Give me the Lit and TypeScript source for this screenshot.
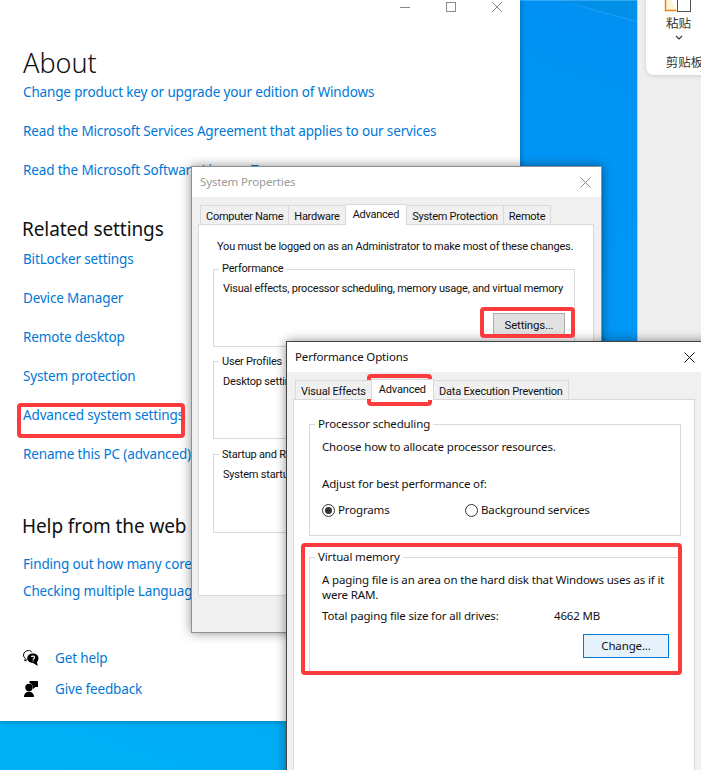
import { LitElement, html, css } from "lit";
import { customElement } from "lit/decorators.js";

@customElement("app-root")
export class AppRoot extends LitElement {
  static styles = css`
    :host { display: block; width: 701px; height: 770px; position: relative; overflow: hidden; background: #efefef; font-family: "Noto Sans", "Noto Sans CJK SC", sans-serif; color: #111; }
    * { box-sizing: border-box; }
    .desktop { position: absolute; left: 0; top: 0; width: 638px; height: 770px; background: linear-gradient(200deg, #0091f2 0%, #009bf6 50%, #00b2f5 100%); border-right: 1px solid #c9c9c9; overflow: hidden; }
    .streak { position: absolute; left: 0; top: 0; }
    .ribbon { position: absolute; left: 646px; top: -10px; width: 70px; height: 85px; background: #fff; border-radius: 8px; box-shadow: 0 1px 4px rgba(0,0,0,.15); display: flex; flex-direction: column; align-items: center; padding: 0 15px 0 0; font-size: 12.5px; color: #333; }
    .ribbon svg { display: block; margin-left: 10px; }
    .paste { margin-top: 3px; line-height: 18px; margin-left: 10px; }
    .chev { margin-top: 2px; }
    .clip { margin-top: 14px; line-height: 18px; margin-left: 22px; white-space: nowrap; }

    .settings { position: absolute; left: 0; top: 0; width: 520px; height: 721px; background: #fff; box-shadow: 0 0 6px rgba(0,0,0,.35); padding: 43px 0 0 23px; }
    .controls { position: absolute; left: 0; top: 0; }
    h1 { margin: 0 0 -1px; font-weight: 300; font-size: 27px; line-height: 40px; }
    h2 { margin: 0 0 0 -1px; font-weight: 400; font-size: 19px; line-height: 28px; letter-spacing: -.1px; }
    .link { display: block; color: #0078d7; font-size: 13.5px; letter-spacing: -.15px; line-height: 20px; white-space: nowrap; text-decoration: none; }
    .spaced { margin-top: 19px; }
    .near { margin-top: 7px; }
    .h-rel { margin-top: 35px; }
    .r2 { margin-top: 6px; }
    .h-web { margin-top: 48px; }
    .r3 { margin-top: 14px; }
    .support { display: flex; align-items: center; gap: 16px; }
    .s1 { margin-top: 47px; }
    .s2 { margin-top: 11px; }
    .support svg { flex: none; }

    .dlg { position: absolute; background: #f0f0f0; box-shadow: 0 0 10px rgba(0,0,0,.45); font-size: 11.5px; letter-spacing: -.15px; line-height: 16px; color: #111; border: 1px solid #8f8f8f; }
    .sys { left: 191px; top: 166px; width: 411px; height: 467px; font-family: Roboto, sans-serif; font-size: 11px; letter-spacing: -.2px; }
    .perf { left: 286px; top: 341px; width: 430px; height: 440px; border-color: #444; }
    .title { height: 30px; background: #fff; display: flex; align-items: center; justify-content: space-between; padding: 0 0 0 8px; font-family: "Noto Sans", sans-serif; font-size: 11.5px; letter-spacing: -.15px; }
    .sys .title { color: #9a9a9a; }
    .title svg { display: block; }
    .sys .title svg { margin-right: 10px; }
    .perf .title svg { margin-right: 20px; }
    .tabs { display: flex; align-items: flex-end; height: 27px; position: relative; z-index: 1; padding-left: 8px; font-family: Roboto, sans-serif; font-size: 11px; letter-spacing: -.25px; }
    .perf .tabs { letter-spacing: -.18px; }
    .tab { height: 19px; background: #f0f0f0; border: 1px solid #d9d9d9; border-bottom: none; border-left: none; padding: 3px 5px 0; line-height: 16px; white-space: nowrap; }
    .tab:first-child { border-left: 1px solid #d9d9d9; }
    .tab.on { height: 21px; background: #fff; border-left: 1px solid #d9d9d9; padding: 2px 7px 0; margin-left: -1px; margin-bottom: -1px; }
    .panel { background: #fff; border: 1px solid #d9d9d9; }
    .sys .panel { margin: 0 7px 0 6px; height: 372px; padding: 14px 18px 0 14px; }
    .perf .panel { margin: 0 20px 0 6px; height: 400px; padding: 24px 13px 0 15px; }
    .group { position: relative; border: 1px solid #d9d9d9; }
    .legend { position: absolute; left: 5px; top: -9px; background: #fff; padding: 0 3px; line-height: 16px; white-space: nowrap; }
    .sys .g2 .legend, .sys .g3 .legend { top: -8px; }
    .sys .g1 { margin-top: 14px; height: 78px; padding: 11px 8px 0 9px; }
    .sys .g2 { margin-top: 14px; height: 78px; padding: 12px 8px 0 9px; }
    .sys .g3 { margin-top: 15px; height: 79px; padding: 12px 8px 0 9px; }
    .sys .group p { margin: 0; white-space: nowrap; }
    .intro { margin: 0 0 0 4px; white-space: nowrap; }
    .btnrow { display: flex; justify-content: flex-end; }
    .btn { font: inherit; letter-spacing: inherit; color: #111; background: #e1e1e1; border: 1px solid #adadad; padding: 0; display: block; }
    .settingsbtn { width: 72px; height: 23px; margin: 16px 1px 0 0; font-size: 11.5px; }
    .perf .g4 { height: 112px; padding: 14px 12px 0 12px; }
    .perf .group p { margin: 0; }
    .perf .g4 .adjust { margin-top: 21px; }
    .radios { display: flex; margin-top: 10px; }
    .radio { display: flex; align-items: center; gap: 3px; }
    .radio.a { width: 143px; }
    .perf .g5 { margin-top: 21px; height: 117px; padding: 14px 6px 0 12px; }
    .perf .g5 p { line-height: 15px; }
    .size { display: flex; margin-top: 6px; }
    .size span:first-child { width: 232px; }
    .changerow { margin-top: 10px; padding-right: 6px; }
    .changebtn { width: 86px; height: 24px; background: #e5f1fb; border-color: #0078d7; margin-right: -1px; }

    .mark { position: absolute; border: 4px solid #fc3b3f; border-radius: 4px; pointer-events: none; }
    .m1 { left: 480px; top: 307px; width: 95px; height: 31px; }
    .m2 { left: 367px; top: 374px; width: 65px; height: 32px; }
    .m3 { left: 301px; top: 543px; width: 381px; height: 132px; }
    .m4 { left: 17px; top: 403px; width: 168px; height: 35px; }
  `;

  render() {
    return html`
      <div class="desktop">
        <svg class="streak" width="638" height="30" viewBox="0 0 638 30"><polygon points="520,0 638,0 638,1 520,1" fill="#fff" fill-opacity=".2"/><polygon points="563,1 638,1 638,21" fill="#0090e8"/><polygon points="563,1 638,21 638,22.500 590,9.500" fill="#fff" fill-opacity=".1"/></svg>
      </div>
      <div class="ribbon">
        <svg width="30" height="22" viewBox="0 0 30 22"><path d="M1.500 0v20.500h11" fill="#fff3d6" stroke="#e8871e" stroke-width="1.500"/><rect x="13.500" y="0" width="13" height="21.500" fill="#fff" stroke="#555"/></svg>
        <div class="paste">粘贴</div>
        <svg class="chev" width="8" height="5" viewBox="0 0 8 5"><path d="M1 1l3 3 3-3" fill="none" stroke="#333" stroke-width="1.100"/></svg>
        <div class="clip">剪贴板</div>
      </div>

      <section class="settings">
        <svg class="controls" width="520" height="14" viewBox="0 0 520 14" fill="none" stroke="#8a8a8a">
          <path d="M400 7.500h10"/><rect x="446.500" y="2.500" width="9" height="9"/><path d="M492 2l10 10M502 2l-10 10"/>
        </svg>
        <h1>About</h1>
        <a class="link">Change product key or upgrade your edition of Windows</a>
        <a class="link spaced">Read the Microsoft Services Agreement that applies to our services</a>
        <a class="link spaced">Read the Microsoft Software License Terms</a>
        <h2 class="h-rel">Related settings</h2>
        <a class="link r2">BitLocker settings</a>
        <a class="link spaced">Device Manager</a>
        <a class="link spaced">Remote desktop</a>
        <a class="link spaced">System protection</a>
        <a class="link spaced">Advanced system settings</a>
        <a class="link spaced">Rename this PC (advanced)</a>
        <h2 class="h-web">Help from the web</h2>
        <a class="link r3">Finding out how many cores my processor has</a>
        <a class="link near">Checking multiple Languages</a>
        <div class="support s1">
          <svg width="16" height="16" viewBox="0 0 16 16"><path d="M9 2.200C8.200 1.200 7 .5 5.700.5 3 .5.500 2.400.500 5c0 1.400.7 2.500 1.800 3.400L1.800 11l2.800-1.700" fill="none" stroke="#000" stroke-width="1"/><path d="M10 3.500c-3.200 0-5.700 2.100-5.700 4.700s2.500 4.700 5.700 4.700l4.800 3-1-3.800c1-.9 1.700-2.300 1.700-3.900 0-2.600-2.400-4.700-5.500-4.700z" fill="#000"/><path d="M8.400 7c.2-1.200 3.200-1.300 3.200.4 0 1.100-1.500 1.100-1.500 2.300M10.100 10.400v1.200" fill="none" stroke="#fff" stroke-width="1.100"/></svg>
          <a class="link">Get help</a>
        </div>
        <div class="support s2">
          <svg width="16" height="16" viewBox="0 0 16 16" fill="#000"><circle cx="6" cy="6.500" r="3.700"/><path d="M1 16c0-3.200 2-5.200 5-5.200s5 2 5 5.200z"/><path d="M6.500 0H15v6h-2.500L10 8V6H9.800C9.500 4 8.300 2.500 6.500 2z"/></svg>
          <a class="link">Give feedback</a>
        </div>
      </section>

      <section class="dlg sys">
        <div class="title"><span>System Properties</span><svg width="11" height="11" viewBox="0 0 11 11" fill="none" stroke="#8a8a8a"><path d="M.5.5l10 10M10.500.5l-10 10"/></svg></div>
        <div class="tabs">
          <div class="tab">Computer Name</div><div class="tab">Hardware</div><div class="tab on">Advanced</div><div class="tab">System Protection</div><div class="tab">Remote</div>
        </div>
        <div class="panel">
          <p class="intro">You must be logged on as an Administrator to make most of these changes.</p>
          <div class="group g1">
            <span class="legend">Performance</span>
            <p>Visual effects, processor scheduling, memory usage, and virtual memory</p>
            <div class="btnrow"><button class="btn settingsbtn">Settings...</button></div>
          </div>
          <div class="group g2"><span class="legend">User Profiles</span><p>Desktop settings related to your sign-in</p></div>
          <div class="group g3"><span class="legend">Startup and Recovery</span><p>System startup, system failure, and debugging information</p></div>
        </div>
      </section>

      <section class="dlg perf">
        <div class="title"><span>Performance Options</span><svg width="11" height="11" viewBox="0 0 11 11" fill="none" stroke="#111"><path d="M.5.5l10 10M10.500.5l-10 10"/></svg></div>
        <div class="tabs">
          <div class="tab">Visual Effects</div><div class="tab on">Advanced</div><div class="tab">Data Execution Prevention</div>
        </div>
        <div class="panel">
          <div class="group g4">
            <span class="legend">Processor scheduling</span>
            <p>Choose how to allocate processor resources.</p>
            <p class="adjust">Adjust for best performance of:</p>
            <div class="radios">
              <label class="radio a">
                <svg width="13" height="13" viewBox="0 0 13 13"><circle cx="6.500" cy="6.500" r="6" fill="#fff" stroke="#333"/><circle cx="6.500" cy="6.500" r="3.500" fill="#333"/></svg>
                Programs</label>
              <label class="radio">
                <svg width="13" height="13" viewBox="0 0 13 13"><circle cx="6.500" cy="6.500" r="6" fill="#fff" stroke="#333"/></svg>
                Background services</label>
            </div>
          </div>
          <div class="group g5">
            <span class="legend">Virtual memory</span>
            <p>A paging file is an area on the hard disk that Windows uses as if it were RAM.</p>
            <div class="size"><span>Total paging file size for all drives:</span><span>4662 MB</span></div>
            <div class="btnrow changerow"><button class="btn changebtn">Change...</button></div>
          </div>
        </div>
      </section>

      <div class="mark m1"></div>
      <div class="mark m2"></div>
      <div class="mark m3"></div>
      <div class="mark m4"></div>
    `;
  }
}
